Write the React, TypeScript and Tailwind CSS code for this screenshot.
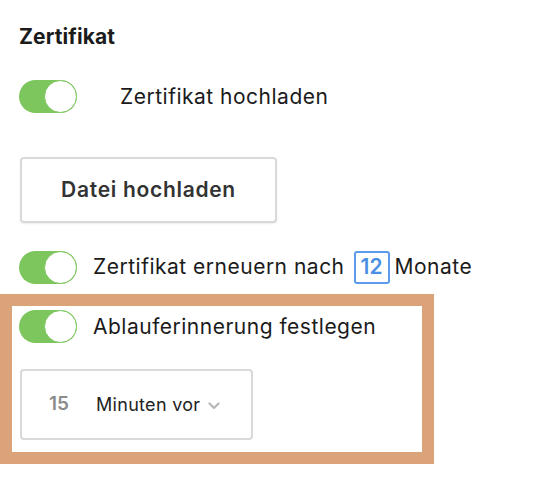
const Toggle = () => (
  <div className="flex h-[33px] w-[58px] shrink-0 justify-end rounded-full bg-[#7cc65d]">
    <div className="h-[33px] w-[33px] rounded-full border border-[#7cc65d] bg-white" />
  </div>
);

const App = () => {
  return (
    <div className="h-[486px] w-[546px] bg-white font-['Inter',sans-serif] text-[#1b1b1b]">
      <div className="pl-[19px] pt-[25px]">
        <h2 className="text-[21px] font-bold leading-[24px] tracking-[0.1px]">Zertifikat</h2>

        <div className="mt-[31px] flex h-[33px] items-center">
          <Toggle />
          <span className="ml-[43px] text-[21px] tracking-[0.5px]">Zertifikat hochladen</span>
        </div>

        <button className="ml-[1px] mt-[44px] h-[66px] w-[257px] rounded-[4px] border-2 border-[#d9d9d9] bg-white text-[21px] font-semibold tracking-[0.7px] text-[#333] shadow-[0_1px_2px_rgba(0,0,0,0.08)]">
          Datei hochladen
        </button>

        <div className="mt-[27px] flex h-[34px] items-center">
          <Toggle />
          <span className="ml-[16px] text-[21px] tracking-[0.5px]">Zertifikat erneuern nach</span>
          <span className="ml-[9px] flex h-[33px] w-[36px] items-center justify-center rounded-[3px] border-2 border-[#5b9bea] text-[21px] font-semibold text-[#4a8fe3]">
            12
          </span>
          <span className="ml-[5px] text-[21px] tracking-[0.5px]">Monate</span>
        </div>
      </div>

      <div className="mt-[10px] w-[434px] border-[12px] border-[#dba379] pb-[12px] pl-[7px] pt-[4px]">
        <div className="flex h-[33px] items-center">
          <Toggle />
          <span className="ml-[16px] text-[21px] tracking-[0.5px]">Ablauferinnerung festlegen</span>
        </div>

        <div className="ml-[1px] mt-[26px] flex h-[71px] w-[233px] items-center rounded-[4px] border-2 border-[#d9d9d9] pl-[27px]">
          <span className="text-[19px] font-semibold text-[#8c8c8c]">15</span>
          <span className="ml-[27px] text-[18px] tracking-[0.3px] text-[#222]">Minuten vor</span>
          <svg className="ml-[8px] mt-[2px]" width="12" height="8" viewBox="0 0 12 8" fill="none">
            <path d="M1.5 1.5 L6 6 L10.5 1.5" stroke="#b8b8b8" strokeWidth="2.2" strokeLinecap="round" strokeLinejoin="round" />
          </svg>
        </div>
      </div>
    </div>
  );
};

export default App;
